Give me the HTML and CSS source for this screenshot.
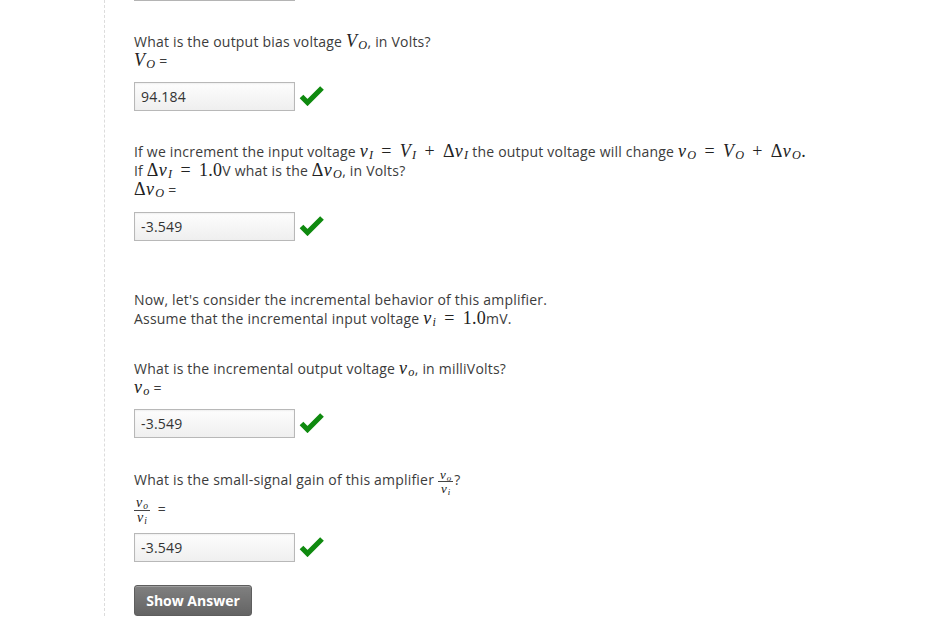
FILE: index.html
```html
<!DOCTYPE html>
<html>
<head>
<meta charset="utf-8">
<link rel="stylesheet" href="styles.css">
</head>
<body>
<div class="page">
  <div class="prev-box"></div>

  <div class="q q1">
    <p class="line">What is the output bias voltage <span class="m"><i>V</i><sub>O</sub></span>, in Volts?</p>
    <p class="line"><span class="m"><i>V</i><sub>O</sub></span> =</p>
    <div class="answer">
      <input class="field" type="text" value="94.184" readonly>
      <svg class="check" width="26" height="20" viewBox="0 0 26 20"><path d="M2.5 10.5 L8.5 16.5 L23 2" fill="none" stroke="#0f8a0f" stroke-width="5.2"/></svg>
    </div>
  </div>

  <div class="q q2">
    <p class="line">If we increment the input voltage <span class="m"><i>v</i><sub>I</sub><span class="op">=</span><i>V</i><sub>I</sub><span class="op">+</span>Δ<i>v</i><sub>I</sub></span> the output voltage will change <span class="m"><i>v</i><sub>O</sub><span class="op">=</span><i>V</i><sub>O</sub><span class="op">+</span>Δ<i>v</i><sub>O</sub>.</span></p>
    <p class="line">If <span class="m">Δ<i>v</i><sub>I</sub><span class="op">=</span>1.0</span>V what is the <span class="m">Δ<i>v</i><sub>O</sub></span>, in Volts?</p>
    <p class="line"><span class="m">Δ<i>v</i><sub>O</sub></span> =</p>
    <div class="answer">
      <input class="field" type="text" value="-3.549" readonly>
      <svg class="check" width="26" height="20" viewBox="0 0 26 20"><path d="M2.5 10.5 L8.5 16.5 L23 2" fill="none" stroke="#0f8a0f" stroke-width="5.2"/></svg>
    </div>
  </div>

  <div class="q q3">
    <p class="line">Now, let's consider the incremental behavior of this amplifier.</p>
    <p class="line">Assume that the incremental input voltage <span class="m"><i>v</i><sub class="lc">i</sub><span class="op">=</span>1.0</span>mV.</p>
  </div>

  <div class="q q4">
    <p class="line">What is the incremental output voltage <span class="m"><i>v</i><sub class="lc">o</sub></span>, in milliVolts?</p>
    <p class="line"><span class="m"><i>v</i><sub class="lc">o</sub></span> =</p>
    <div class="answer">
      <input class="field" type="text" value="-3.549" readonly>
      <svg class="check" width="26" height="20" viewBox="0 0 26 20"><path d="M2.5 10.5 L8.5 16.5 L23 2" fill="none" stroke="#0f8a0f" stroke-width="5.2"/></svg>
    </div>
  </div>

  <div class="q q5">
    <p class="line">What is the small-signal gain of this amplifier <span class="frac small"><span class="num"><i>v</i><sub class="lc">o</sub></span><span class="den"><i>v</i><sub class="lc">i</sub></span></span>?</p>
    <p class="line fracline"><span class="frac"><span class="num"><i>v</i><sub class="lc">o</sub></span><span class="den"><i>v</i><sub class="lc">i</sub></span></span> =</p>
    <div class="answer">
      <input class="field" type="text" value="-3.549" readonly>
      <svg class="check" width="26" height="20" viewBox="0 0 26 20"><path d="M2.5 10.5 L8.5 16.5 L23 2" fill="none" stroke="#0f8a0f" stroke-width="5.2"/></svg>
    </div>
  </div>

  <button class="show-answer" type="button">Show Answer</button>
</div>
</body>
</html>
```
FILE: styles.css
```css
html, body {
  margin: 0;
  padding: 0;
  background: #fff;
}

body {
  font-family: "Open Sans", "Liberation Sans", sans-serif;
  font-size: 14px;
  letter-spacing: 0.2px;
  color: #3c3c3c;
}

.page {
  margin-left: 104px;
  border-left: 1px dashed #dcdcdc;
  padding-left: 29px;
  min-height: 616px;
  box-sizing: border-box;
}

.prev-box {
  width: 161px;
  height: 1px;
  background: #b4b4b4;
}

.line {
  margin: 0;
  line-height: 19px;
  height: 19px;
  white-space: nowrap;
}

.q1 { padding-top: 31px; }
.q2 { padding-top: 31px; }
.q3 { padding-top: 49px; }
.q4 { padding-top: 31px; }
.q5 { padding-top: 32px; }

.answer {
  display: flex;
  align-items: center;
  gap: 4px;
  margin-top: 12px;
}

.q2 .answer { margin-top: 13px; }

.field {
  width: 161px;
  height: 29px;
  box-sizing: border-box;
  border: 1px solid #b8b8b8;
  background: linear-gradient(to bottom, #fdfdfd, #efefef);
  box-shadow: inset 0 1px 2px rgba(0,0,0,0.06);
  font-family: "Open Sans", "Liberation Sans", sans-serif;
  font-size: 14px;
  letter-spacing: 0.2px;
  color: #333;
  padding: 0 6px;
  margin: 0;
  outline: none;
}

.check {
  display: block;
  margin-top: -1px;
}

.m {
  font-family: "Liberation Serif", "DejaVu Serif", serif;
  font-size: 18px;
  letter-spacing: 0.3px;
  color: #222;
  line-height: 0;
  white-space: nowrap;
}

.m i {
  font-style: italic;
}

.m sub, .frac sub {
  font-family: "Liberation Serif", serif;
  font-style: italic;
  font-size: 68%;
  vertical-align: -0.2em;
  line-height: 0;
  margin-left: 1px;
}

.op {
  padding: 0 8px;
  font-style: normal;
}

.frac {
  display: inline-flex;
  flex-direction: column;
  align-items: center;
  vertical-align: middle;
  font-family: "Liberation Serif", serif;
  font-size: 14px;
  letter-spacing: 0;
  line-height: 12px;
  color: #222;
  margin-right: 4px;
}

.frac .num {
  border-bottom: 1px solid #444;
  padding: 0 2px 1px;
}

.frac .den {
  padding: 1px 2px 0;
}

.frac.small {
  font-size: 13px;
  line-height: 11px;
  margin: -4px 1px -4px 0;
}

.fracline {
  height: 38px;
  line-height: 38px;
  margin-top: 1px;
}

.q5 .answer { margin-top: 5px; }

.show-answer {
  display: block;
  margin-top: 23px;
  width: 118px;
  height: 31px;
  border: 1px solid #5e5e5e;
  border-radius: 3px;
  background: linear-gradient(to bottom, #808080, #646464);
  box-shadow: inset 0 1px 0 rgba(255,255,255,0.25);
  color: #fff;
  font-family: "Open Sans", "Liberation Sans", sans-serif;
  font-weight: bold;
  font-size: 14px;
  letter-spacing: 0;
  padding: 0;
  cursor: pointer;
}
```
